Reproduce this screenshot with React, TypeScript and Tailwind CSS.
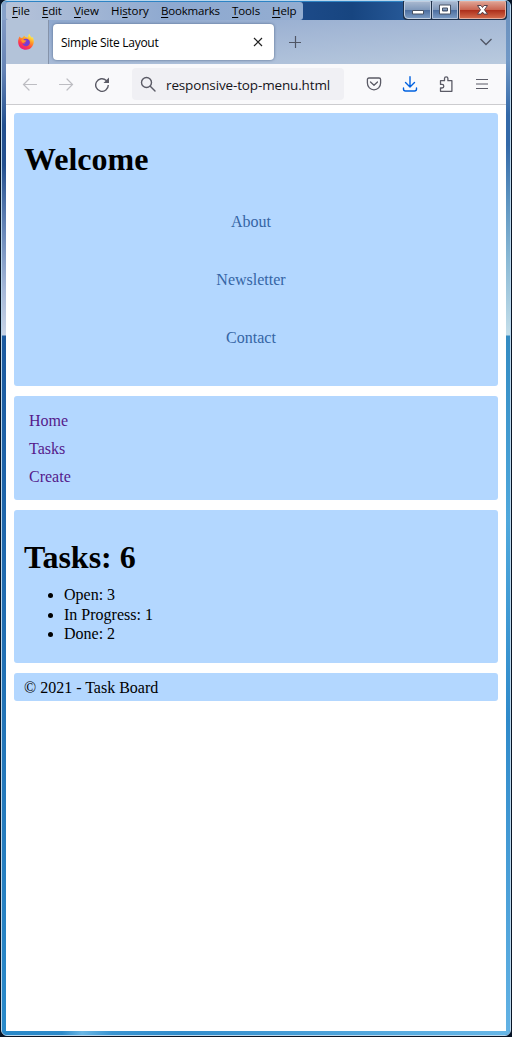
import React from "react";

const menus = [
  { k: "F", pre: "", post: "ile", w: "w-[30px]", s: "tracking-[-0.1px]" },
  { k: "E", pre: "", post: "dit", w: "w-[32px]", s: "tracking-[-0.2px]" },
  { k: "V", pre: "", post: "iew", w: "w-[37px]", s: "tracking-[-0.1px]" },
  { k: "s", pre: "Hi", post: "tory", w: "w-[50px]", s: "tracking-[-0.1px]" },
  { k: "B", pre: "", post: "ookmarks", w: "w-[71px]", s: "tracking-[-0.2px]" },
  { k: "T", pre: "", post: "ools", w: "w-[40px]", s: "tracking-[-0.1px]" },
  { k: "H", pre: "", post: "elp", w: "w-[30px]", s: "tracking-[-0.1px]" },
];

function Firefox() {
  return (
    <svg className="h-[18px] w-[18px]" viewBox="0 0 18 18">
      <defs>
        <linearGradient id="flame" x1="0.8" y1="0" x2="0.25" y2="1">
          <stop offset="0.1" stopColor="#fff04a" />
          <stop offset="0.4" stopColor="#ff9a25" />
          <stop offset="0.7" stopColor="#ff3d45" />
          <stop offset="1" stopColor="#e5158c" />
        </linearGradient>
      </defs>
      <path fill="url(#flame)" d="M2.5 3.5 4 5l2-.5L7 2.5 8.5 4l2.5.5C11 3 11.5 1.5 12.5.8c.2 2 1.500 2.400 2 4L15.500 4c1.300 2 1.500 3.600 1.200 5.800C16 14 13 16.800 9 16.800S1.500 14 1.200 9.700C1 7 1.700 5 2.500 3.500Z" />
      <path fill="#753bd5" d="M6.300 6.500c1.500-1 4.200-1.200 5.700.500 1.700 1.900 1 5.200-1.600 6-2.400.700-4.700-.600-5-2.700 1 .600 2.500.400 3.400-.500l-2.600-.900Z" />
      <path fill="#ff9728" d="M4 7c1.300-1 2.400-.800 3.400.200l2 .300c.200 1-.900 1.200-1.800 1.600-.700.900-1.700.900-2.300.400Z" />
    </svg>
  );
}

function Side({ right = false }: { right?: boolean }) {
  return right ? (
    <div className="w-1 shrink-0 bg-[linear-gradient(180deg,#6c92bf_0,#7098c6_40px,#3469a8_95px,#3469a8_125px,#5c93c0_180px,#8ab9d5_240px,#c5dfea_315px,#338bc2_316px,#4fa8dc_500px,#2f8aca_700px,#62b2e4_100%)]" />
  ) : (
    <div className="w-1 shrink-0 bg-[linear-gradient(180deg,#8099c4_0,#6583b5_50px,#23508f_105px,#24508f_145px,#6887b8_210px,#a6b8d8_270px,#c8d3e5_315px,#1d5a9f_316px,#1e63a8_450px,#2a8aca_100%)]" />
  );
}

function Caption() {
  return (
    <svg className="mt-[-1px] mr-[3px] h-[20px] w-[104px] shrink-0" viewBox="0 0 104 20">
      <defs>
        <linearGradient id="glass" x2="0" y2="1">
          <stop stopColor="#a9b9d0" />
          <stop offset=".48" stopColor="#7f98ba" />
          <stop offset=".5" stopColor="#4b6d9e" />
          <stop offset="1" stopColor="#7b9bc4" />
        </linearGradient>
        <linearGradient id="red" x2="0" y2="1">
          <stop stopColor="#dfa394" />
          <stop offset=".48" stopColor="#ca6652" />
          <stop offset=".5" stopColor="#ab2c19" />
          <stop offset="1" stopColor="#d46b4c" />
        </linearGradient>
      </defs>
      <path fill="#1d3049" d="M0 0h104v15q0 4-4 4H4q-4 0-4-4Z" />
      <path fill="url(#glass)" stroke="#c0cddf" d="M1.500 .5h26v17H5q-3.500 0-3.500-3.500Z" />
      <path fill="url(#glass)" stroke="#b2c3da" d="M29.500 .5h25v17h-25Z" />
      <path fill="url(#red)" stroke="#e5ae9f" d="M56.500 .5h46V14q0 3.500-3.500 3.500H56.500Z" />
      <path fill="#fff" stroke="#485365" d="M9.500 9.500h11v3.500h-11Z" />
      <path fill="#fff" fillRule="evenodd" stroke="#485365" d="M36.500 4h11v9h-11Zm3 3v3h5v-3Z" />
      <path fill="#fff" stroke="#55404a" d="M74.500 4.500h3.500l1.500 2 1.500-2h3.500l-3 4.300 3 4.300H81l-1.500-2-1.500 2h-3.500l3-4.300Z" />
    </svg>
  );
}

const card = "rounded-[3px] bg-[#b3d7ff] px-[10px]";

export default function App() {
  return (
    <div className="h-[1037px] w-[512px] overflow-hidden bg-[#071426]">
      <div className="ml-px flex h-[1036px] w-[510px] flex-col overflow-hidden rounded-[6px] border border-[#b9d6ec] bg-[#2d83c4] pt-px">
        <div className="flex h-[18px] shrink-0 bg-[linear-gradient(90deg,#87a2ca_0,#1c4a88_300px,#174580_350px,#2b5e9e_420px,#6c92bf_506px)]">
          <div className="ml-1 flex h-[18px] w-[297px] rounded-[3px] bg-[linear-gradient(90deg,#b6c3d9,#8ea9d0_55%,#93add1)] pl-[6px] font-['Open_Sans',sans-serif] text-[11.5px] leading-[18px] text-black">
            {menus.map((m) => (
              <span key={m.k} className={`${m.w} ${m.s} shrink-0 whitespace-nowrap`}>
                {m.pre}<u className="underline-offset-2">{m.k}</u>{m.post}
              </span>
            ))}
          </div>
          <div className="ml-auto"><Caption /></div>
        </div>
        <div className="flex h-[1011px] shrink-0">
          <Side />
          <div className="flex w-[500px] shrink-0 flex-col bg-white">
            <div className="flex h-[44px] shrink-0 items-center bg-[linear-gradient(175deg,#8da7ce_0%,#a3b7d5_45%,#b9cade_100%)]">
              <div className="flex h-full w-[43px] items-center border-r border-[#8593aa] bg-[#b3c3d9] pl-[11px]"><Firefox /></div>
              <div className="ml-1 flex h-[36px] w-[221px] items-center rounded bg-white pr-[11px] pl-2 shadow-[0_0_3px_#53698b]">
                <span className="grow pt-[2px] font-['Open_Sans',sans-serif] text-[12px] tracking-[-0.28px] text-black">Simple Site Layout</span>
                <svg className="h-[10px] w-[10px]" viewBox="0 0 10 10" fill="none" stroke="#222" strokeWidth="1.200"><path d="m1 1 8 8M9 1 1 9" /></svg>
              </div>
              <svg className="ml-[14px] h-[14px] w-[14px]" viewBox="0 0 14 14" fill="none" stroke="#505665" strokeWidth="1.200"><path d="M1 7.500h12M7.500 1v12" /></svg>
              <svg className="mr-[14px] ml-auto h-[8px] w-[12px]" viewBox="0 0 12 8" fill="none" stroke="#505665" strokeWidth="1.300"><path d="m.5 1 5.500 5.500L11.500 1" /></svg>
            </div>
            <div className="flex h-[41px] shrink-0 items-center border-b border-[#cccccf] bg-[#f9f9fb] text-[#5b5b66]">
              <svg className="ml-4 h-4 w-4" viewBox="0 0 16 16" fill="none" stroke="#bdbdc2" strokeWidth="1.200" strokeLinecap="round"><path d="M14.500 8.500H1.500m5.500-5.500-5.500 5.500 5.500 5.500" /></svg>
              <svg className="ml-5 h-4 w-4" viewBox="0 0 16 16" fill="none" stroke="#bdbdc2" strokeWidth="1.200" strokeLinecap="round"><path d="M1.500 8.500h13M9 3l5.500 5.500L9 14" /></svg>
              <svg className="ml-5 h-4 w-4" viewBox="0 0 16 16" fill="none" stroke="currentColor" strokeWidth="1.400"><path d="M14.300 9a6.300 6.300 0 1 1-2-4.600l1.700 1.500" /><path fill="currentColor" stroke="none" d="M15 1.500V7H9.500Z" /></svg>
              <div className="ml-[22px] flex h-8 w-[212px] items-center rounded bg-[#f0f0f4] pl-2 text-[#15141a]">
                <svg className="h-4 w-4 shrink-0 text-[#5b5b66]" viewBox="0 0 16 16" fill="none" stroke="currentColor" strokeWidth="1.400" strokeLinecap="round"><circle cx="6.500" cy="6.500" r="5" /><path d="m10.500 10.500 4.500 4.500" /></svg>
                <span className="ml-[10px] whitespace-nowrap pt-[2px] font-['Open_Sans',sans-serif] text-[13.5px] tracking-[-0.14px]">responsive-top-menu.html</span>
              </div>
              <svg className="ml-[22px] h-4 w-4" viewBox="0 0 16 16" fill="none" stroke="currentColor" strokeWidth="1.300" strokeLinecap="round" strokeLinejoin="round"><path d="M3 2h10q1.600 0 1.600 1.600V7c0 4-3 6.800-6.600 6.800S1.400 11 1.400 7V3.600Q1.400 2 3 2ZM4.500 6 8 9.300 11.500 6" /></svg>
              <svg className="ml-5 h-4 w-4" viewBox="0 0 16 16" fill="none" stroke="#0061e0" strokeWidth="1.400" strokeLinecap="round" strokeLinejoin="round"><path d="M8 .8v10M3.500 6.500 8 11l4.500-4.500M1.500 12v1q0 2 2 2h9q2 0 2-2v-1" /></svg>
              <svg className="ml-5 h-4 w-4" viewBox="0 0 16 16" fill="none" stroke="currentColor" strokeWidth="1.300" strokeLinejoin="round"><path d="M2.500 7V4.700h4V2.500a1.700 1.700 0 0 1 3.400 0v2.200h4v10.600H2.500V12H4a1.800 1.800 0 0 0 0-3.600H2.500Z" /></svg>
              <svg className="ml-5 h-4 w-4" viewBox="0 0 16 16" fill="none" stroke="currentColor" strokeWidth="1.200"><path d="M2 3.500h12M2 8h12M2 12.500h12" /></svg>
            </div>
            <main className="flex grow flex-col gap-[10px] px-2 pt-2 font-['Liberation_Serif',serif] text-[16px] text-black">
              <header className={`${card} h-[273px]`}>
                <h1 className="pt-[27px] text-[32px] leading-[38px] font-bold">Welcome</h1>
                <nav className="flex flex-col items-center gap-10 pt-[35px] pr-[10px] leading-[18px] text-[#3565a5]">
                  <a>About</a><a>Newsletter</a><a>Contact</a>
                </nav>
              </header>
              <nav className={`${card} flex h-[104px] flex-col gap-[10px] pt-4 pl-[15px] leading-[18px] text-[#551a8b]`}>
                <a>Home</a><a>Tasks</a><a>Create</a>
              </nav>
              <section className={`${card} h-[153px]`}>
                <h1 className="pt-[28px] text-[32px] leading-[38px] font-bold">Tasks: 6</h1>
                <ul className="list-disc pt-[9px] pl-10 leading-[19.500px]">
                  <li>Open: 3</li><li>In Progress: 1</li><li>Done: 2</li>
                </ul>
              </section>
              <footer className={`${card} h-[28px] pt-[6px] leading-[18px]`}>© 2021 - Task Board</footer>
            </main>
          </div>
          <Side right />
        </div>
        <div className="h-1 shrink-0 bg-[linear-gradient(90deg,#2888c8_0,#2c8aca_60px,#69b6e5_80px,#3994d1_110px,#328dcc_180px,#58ace0_400px,#67b7e7_100%)]" />
      </div>
    </div>
  );
}
